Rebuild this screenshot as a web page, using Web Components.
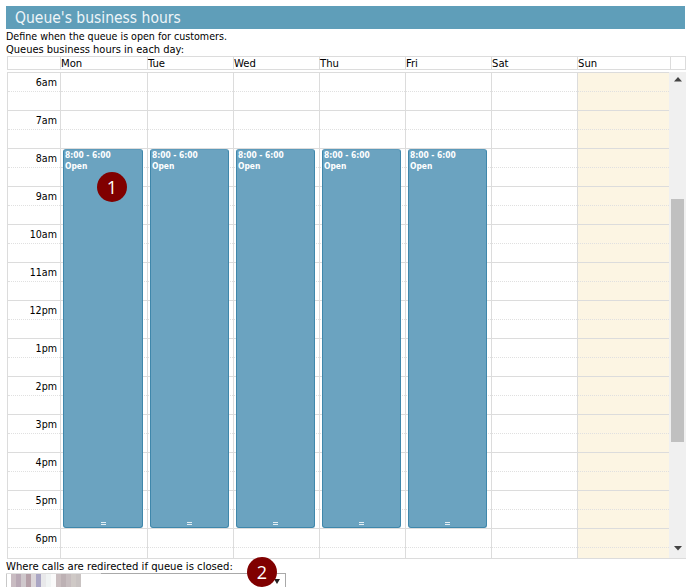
<!DOCTYPE html>
<html>
<head>
<meta charset="utf-8">
<title>Queue's business hours</title>
<style>
  html, body { margin: 0; padding: 0; background: #fff; }
  body { width: 698px; height: 587px; overflow: hidden; font-family: "DejaVu Sans", sans-serif; font-stretch: condensed; font-size: 10.6px; color: #000; }
</style>
</head>
<body>
<queue-page></queue-page>

<script>
const hours = ["6am", "7am", "8am", "9am", "10am", "11am", "12pm", "1pm", "2pm", "3pm", "4pm", "5pm", "6pm"];
const days = ["Mon", "Tue", "Wed", "Thu", "Fri", "Sat", "Sun"];

class NumberBadge extends HTMLElement {
  constructor() {
    super();
    this.attachShadow({ mode: "open" });
    this.shadowRoot.innerHTML = `
      <style>
        :host {
          position: absolute;
          width: 30px;
          height: 30px;
          border-radius: 50%;
          background: #800000;
          color: #fff;
          display: flex;
          align-items: center;
          justify-content: center;
          font-family: "Open Sans", sans-serif;
          font-stretch: normal;
          font-size: 18px;
          line-height: 1;
        }
      </style>
      <slot></slot>
    `;
  }
}

class HoursEvent extends HTMLElement {
  constructor() {
    super();
    this.attachShadow({ mode: "open" });
    this.shadowRoot.innerHTML = `
      <style>
        :host {
          position: absolute;
          top: 77px;
          height: 379px;
          box-sizing: border-box;
          background: #6ba3c0;
          border: 1px solid #3f87ab;
          border-top-color: #5d9aba;
          border-radius: 3px;
          color: #fff;
          font-family: "DejaVu Sans", sans-serif;
          font-stretch: condensed;
          font-size: 8.4px;
          font-weight: bold;
          line-height: 11px;
          padding: 0 0 0 1px;
        }
        .grip {
          position: absolute;
          left: 0;
          right: 0;
          bottom: 1px;
          height: 5px;
        }
        .grip i {
          display: block;
          width: 5px;
          height: 1px;
          margin: 1px auto;
          background: #e4eff5;
        }
        div { white-space: nowrap; }
      </style>
      <div>8:00 - 6:00</div>
      <div class="state">Open</div>
      <span class="grip"><i></i><i></i></span>
    `;
  }
}

class ScrollTrack extends HTMLElement {
  constructor() {
    super();
    this.attachShadow({ mode: "open" });
    this.shadowRoot.innerHTML = `
      <style>
        :host {
          display: flex;
          flex-direction: column;
          align-items: center;
          justify-content: space-between;
          position: relative;
          background: #f0f0f0;
          height: 100%;
          box-sizing: border-box;
          padding: 5px 0 7px;
        }
        .thumb {
          position: absolute;
          top: 127px;
          left: 2px;
          width: 13px;
          height: 243px;
          background: #c0c0c0;
        }
        svg { display: block; }
      </style>
      <svg width="8" height="5" viewBox="0 0 8 5"><path d="M0 4.5 L4 0 L8 4.5 Z" fill="#444"/></svg>
      <div class="thumb"></div>
      <svg width="8" height="5" viewBox="0 0 8 5"><path d="M0 0 L8 0 L4 4.5 Z" fill="#444"/></svg>
    `;
  }
}

class WeekCalendar extends HTMLElement {
  constructor() {
    super();
    this.attachShadow({ mode: "open" });
    const head = days.map(d => `<div class="hd">${d}</div>`).join("");
    const timeCol = hours.map((h, i) => `<div class="slot ${i == 12 ? "last" : ""}"><span>${h}</span></div>`).join("");
    const dayCols = days.map((d, i) => {
      const slots = hours.map((h, j) => `<div class="slot ${j == 12 ? "last" : ""}"></div>`).join("");
      const ev = i < 5 ? `<hours-event style="left:2px;width:${i == 0 ? 80 : 79}px"></hours-event>` : "";
      return `<div class="day ${i == 6 ? "sun" : ""}">${slots}${ev}</div>`;
    }).join("");
    this.shadowRoot.innerHTML = `
      <style>
        :host { display: block; width: 679px; margin-left: 7px; box-sizing: border-box; }
        .head, .body { display: grid; }
        .head {
          grid-template-columns: 52px 87px 86px 86px 86px 86px 86px 93px 15px;
          height: 12px;
          border: 1px solid #dcdcdc;
          line-height: 13px;
          font-size: 11.2px;
        }
        .hd { border-left: 1px solid #dcdcdc; }
        .body {
          grid-template-columns: 52px 87px 86px 86px 86px 86px 86px 92px 17px;
          height: 486px;
          margin-top: 2px;
          border-left: 1px solid #dcdcdc;
          border-bottom: 1px solid #dcdcdc;
          overflow: hidden;
        }
        .col, .day { position: relative; height: 486px; }
        .day { border-left: 1px solid #dcdcdc; box-sizing: border-box; }
        .sun { background: #fcf5e3; }
        .slot {
          box-sizing: border-box;
          height: 38px;
          border-top: 1px solid #dcdcdc;
          position: relative;
        }
        .slot::after {
          content: "";
          position: absolute;
          left: 0; right: 0; top: 18px;
          border-top: 1px dotted #e0e0e0;
        }
        .slot.last { height: 30px; }
        .col .slot span {
          display: block;
          text-align: right;
          padding-right: 3px;
          line-height: 18px;
        }
      </style>
      <div class="head">
        <div></div>${head}<div class="hd"></div>
      </div>
      <div class="body">
        <div class="col">${timeCol}</div>
        ${dayCols}
        <scroll-track></scroll-track>
      </div>
    `;
  }
}

class TargetSelect extends HTMLElement {
  constructor() {
    super();
    this.attachShadow({ mode: "open" });
    this.shadowRoot.innerHTML = `
      <style>
        :host {
          display: block;
          position: relative;
          width: 280px;
          height: 20px;
          margin-left: 6px;
          box-sizing: border-box;
          border: 1px solid #a9a9a9;
          border-left-color: #c8c8c8;
          background: #fff;
        }
        :host::before {
          content: "";
          position: absolute;
          left: -1px; top: -1px;
          width: 95px; height: 1px;
          background: #dedede;
        }
        .blur { display: flex; height: 13px; margin: 0 0 0 4px; }
        .blur i { display: block; width: 5px; height: 13px; }
        .arrow {
          position: absolute;
          right: 5px; top: 5px;
          width: 0; height: 0;
          border: 3px solid transparent;
          border-top: 5px solid #222;
        }
      </style>
      <div class="blur">
        <i style="background:#c9bcc2"></i><i style="background:#b9a9b5"></i><i style="background:#cfc8cc"></i><i style="background:#b5a0a8"></i><i style="background:#dcd6d9"></i><i style="background:#aaa6c4"></i><i style="background:#e8e8ea"></i><i style="background:#f0f3f3"></i><i style="background:#fafafa"></i><i style="background:#c9bdbf"></i><i style="background:#bdb1b4"></i><i style="background:#c7bdbf"></i><i style="background:#cfc9c6"></i><i style="background:#c9c3c2"></i>
      </div>
      <span class="arrow"></span>
    `;
  }
}

class QueuePage extends HTMLElement {
  constructor() {
    super();
    this.attachShadow({ mode: "open" });
    this.shadowRoot.innerHTML = `
      <style>
        :host { display: block; position: relative; width: 698px; height: 587px; padding-top: 6px; box-sizing: border-box; }
        h1 {
          margin: 0 0 0 6px;
          width: 679px;
          height: 23px;
          background: #5f9eb9;
          color: #eef5f8;
          font-size: 15.5px;
          font-weight: normal;
          line-height: 24px;
          padding-left: 9px;
          box-sizing: border-box;
        }
        p { margin: 0 0 0 6px; line-height: 13px; white-space: nowrap; }
        .lead { padding-top: 1px; }
        .label { font-size: 11px; }
        .where { line-height: 13px; padding-top: 1px; font-size: 11.2px; }
      </style>
      <h1>Queue's business hours</h1>
      <p class="lead">Define when the queue is open for customers.</p>
      <p class="label">Queues business hours in each day:</p>
      <week-calendar></week-calendar>
      <p class="where">Where calls are redirected if queue is closed:</p>
      <target-select></target-select>
      <number-badge style="left:97px;top:172px">1</number-badge>
      <number-badge style="left:247px;top:557px">2</number-badge>
    `;
  }
}

customElements.define("number-badge", NumberBadge);
customElements.define("hours-event", HoursEvent);
customElements.define("scroll-track", ScrollTrack);
customElements.define("week-calendar", WeekCalendar);
customElements.define("target-select", TargetSelect);
customElements.define("queue-page", QueuePage);
</script>
</body>
</html>
